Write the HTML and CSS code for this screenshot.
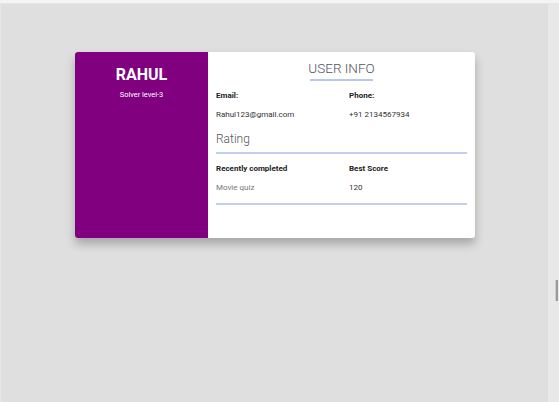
FILE: index.html
```html
<!DOCTYPE html>
<html>
<head>
<meta charset="utf-8">
<link rel="stylesheet" href="styles.css">
</head>
<body>
<div class="topband"></div>
<div class="main">
  <div class="stage">
    <div class="card">
      <div class="side">
        <h1 class="name">RAHUL</h1>
        <p class="level">Solver level-3</p>
      </div>
      <div class="info">
        <h2 class="title">USER INFO</h2>
        <div class="grid">
          <div class="cell">
            <h4 class="label">Email:</h4>
            <p class="value">Rahul123@gmail.com</p>
          </div>
          <div class="cell">
            <h4 class="label">Phone:</h4>
            <p class="value">+91 2134567934</p>
          </div>
        </div>
        <h3 class="section">Rating</h3>
        <div class="grid rated">
          <div class="cell">
            <h4 class="label">Recently completed</h4>
            <p class="value muted">Movie quiz</p>
          </div>
          <div class="cell">
            <h4 class="label">Best Score</h4>
            <p class="value">120</p>
          </div>
        </div>
      </div>
    </div>
  </div>
  <div class="rail"><div class="thumb"></div></div>
</div>
</body>
</html>
```
FILE: styles.css
```css
html, body {
  margin: 0;
  padding: 0;
  height: 100%;
  background: #e8e8e8;
  font-family: Roboto, "Liberation Sans", sans-serif;
}
.topband {
  height: 3px;
  background: #f4f4f4;
}
.main {
  display: flex;
  height: 399px;
}
.stage {
  flex: 1;
  background: #dfdfdf;
  border-top: 1px solid #e6e6e6;
  border-left: 1px solid #e6e6e6;
  border-right: 1px solid #e9e9e9;
  padding-top: 48px;
  box-sizing: border-box;
}
.rail {
  width: 10px;
  position: relative;
}
.thumb {
  position: absolute;
  left: 6px;
  top: 277px;
  width: 2px;
  height: 21px;
  background: #9a9a9a;
  border-left: 1px solid #cfcfcf;
}
.card {
  width: 400px;
  height: 186px;
  margin: 0 0 0 74px;
  display: flex;
  background: #fff;
  border-radius: 3px;
  box-shadow: 0 6px 10px rgba(0,0,0,0.25);
  overflow: hidden;
}
.side {
  width: 133px;
  background: #800080;
  color: #fff;
  text-align: center;
  padding-top: 13px;
  box-sizing: border-box;
}
.name {
  margin: 0;
  font-size: 16px;
  font-weight: 700;
  line-height: 20px;
}
.level {
  margin: 5px 0 0;
  font-size: 7.4px;
  line-height: 10px;
}
.info {
  flex: 1;
  padding: 7px 8px 0;
}
.title {
  margin: 0 auto;
  width: 63px;
  font-size: 13.5px;
  font-weight: 300;
  color: #4f5461;
  text-align: center;
  white-space: nowrap;
  display: flex;
  justify-content: center;
  line-height: 18px;
  padding-bottom: 2px;
  border-bottom: 2px solid #b7c9ea;
}
.grid {
  display: grid;
  grid-template-columns: 133px 1fr;
  margin-top: 10px;
}
.label {
  margin: 0;
  font-size: 8px;
  font-weight: 700;
  color: #222;
  line-height: 10px;
}
.value {
  margin: 9px 0 0;
  font-size: 8px;
  color: #333;
  line-height: 10px;
}
.muted { color: #777; }
.section {
  margin: 10px 0 0;
  font-size: 12px;
  font-weight: 300;
  color: #555;
  line-height: 18px;
  padding-bottom: 4px;
  border-bottom: 2px solid #c0d0ea;
}
.rated {
  margin-top: 10px;
  padding-bottom: 10px;
  border-bottom: 2px solid #c0d0ea;
}
```
